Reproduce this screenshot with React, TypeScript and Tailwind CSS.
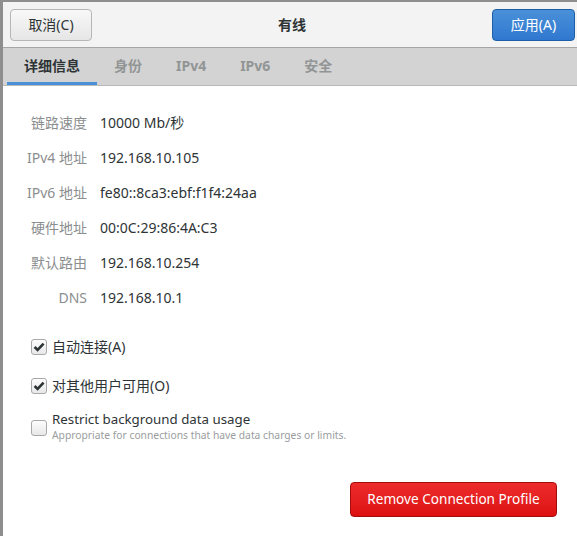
import type { ReactNode } from 'react'

const FONT = { fontFamily: '"Noto Sans", "Noto Sans CJK SC", sans-serif' }

const details: [string, string][] = [
  ['链路速度', '10000 Mb/秒'],
  ['IPv4 地址', '192.168.10.105'],
  ['IPv6 地址', 'fe80::8ca3:ebf:f1f4:24aa'],
  ['硬件地址', '00:0C:29:86:4A:C3'],
  ['默认路由', '192.168.10.254'],
  ['DNS', '192.168.10.1'],
]

const tabs = ['详细信息', '身份', 'IPv4', 'IPv6', '安全']

function CheckBox({ checked }: { checked: boolean }) {
  return (
    <span className="flex h-4 w-4 shrink-0 items-center justify-center rounded-[3px] border border-[#a8a8a8] bg-gradient-to-b from-[#fdfdfd] to-[#e8e8e8]">
      {checked && (
        <svg width="12" height="12" viewBox="0 0 12 12">
          <path d="M1.6 6 L4.6 9 L10.6 2.6" fill="none" stroke="#2e3436" strokeWidth="2.6" />
        </svg>
      )}
    </span>
  )
}

function Option({ checked, children }: { checked: boolean; children: ReactNode }) {
  return (
    <label className="flex items-center gap-[5px] text-[14px] text-[#2e3436]">
      <CheckBox checked={checked} />
      {children}
    </label>
  )
}

export default function App() {
  return (
    <div className="h-[536px] w-[577px] overflow-hidden bg-[#8e8e8e] pl-[3px] pt-[2px]" style={FONT}>
      <div className="flex h-full flex-col bg-white">
        {/* header bar */}
        <div className="flex h-[46px] items-center justify-between border-b border-[#a6a6a6] bg-[#f3f3f3] pl-[7px] pr-[2px]">
          <button className="h-[32px] w-[82px] rounded-[4px] border border-[#b6b6b6] bg-gradient-to-b from-[#f8f8f8] to-[#e6e6e6] text-[14px] text-[#2e3436]">
            取消(C)
          </button>
          <span className="text-[14px] font-bold text-[#2e3436]">有线</span>
          <button className="h-[32px] w-[83px] rounded-[4px] border border-[#1c5ea8] bg-gradient-to-b from-[#4a90d9] to-[#2f78cf] text-[14px] text-white">
            应用(A)
          </button>
        </div>

        {/* tabs */}
        <div className="flex h-[38px] items-stretch border-b border-[#b8b8b8] bg-[#d3d3d3] pl-[4px]">
          {tabs.map((t, i) => (
            <div
              key={t}
              className={`flex items-center border-b-[3px] px-[17px] text-[14px] font-bold ${
                i === 0 ? 'border-[#4a90d9] text-[#2e3436]' : 'border-transparent text-[#929595]'
              }`}
            >
              {t}
            </div>
          ))}
        </div>

        {/* details */}
        <div className="mt-[25px] flex flex-col gap-[13px] pl-[24px]">
          {details.map(([label, value]) => (
            <div key={label} className="flex h-[22px] items-center text-[14px]">
              <span className="w-[60px] text-right text-[#8b8e8f]">{label}</span>
              <span className="ml-[13px] text-[#2e3436]">{value}</span>
            </div>
          ))}
        </div>

        <div className="mt-[28px] flex flex-col gap-[18px] pl-[28px]">
          <Option checked>自动连接(A)</Option>
          <Option checked>对其他用户可用(O)</Option>
          <div className="flex items-center gap-[5px]">
            <CheckBox checked={false} />
            <div className="-mt-[4px] flex flex-col">
              <span className="text-[13.3px] leading-[18px] text-[#2e3436]">Restrict background data usage</span>
              <span className="text-[10.3px] leading-[14px] text-[#9a9d9e]">
                Appropriate for connections that have data charges or limits.
              </span>
            </div>
          </div>
        </div>

        <div className="mt-auto mb-[19px] flex justify-end pr-[20px]">
          <button className="h-[35px] w-[207px] rounded-[4px] border border-[#a50d0d] bg-gradient-to-b from-[#ed2b2b] to-[#dd1010] text-[13.6px] text-white">
            Remove Connection Profile
          </button>
        </div>
      </div>
    </div>
  )
}
